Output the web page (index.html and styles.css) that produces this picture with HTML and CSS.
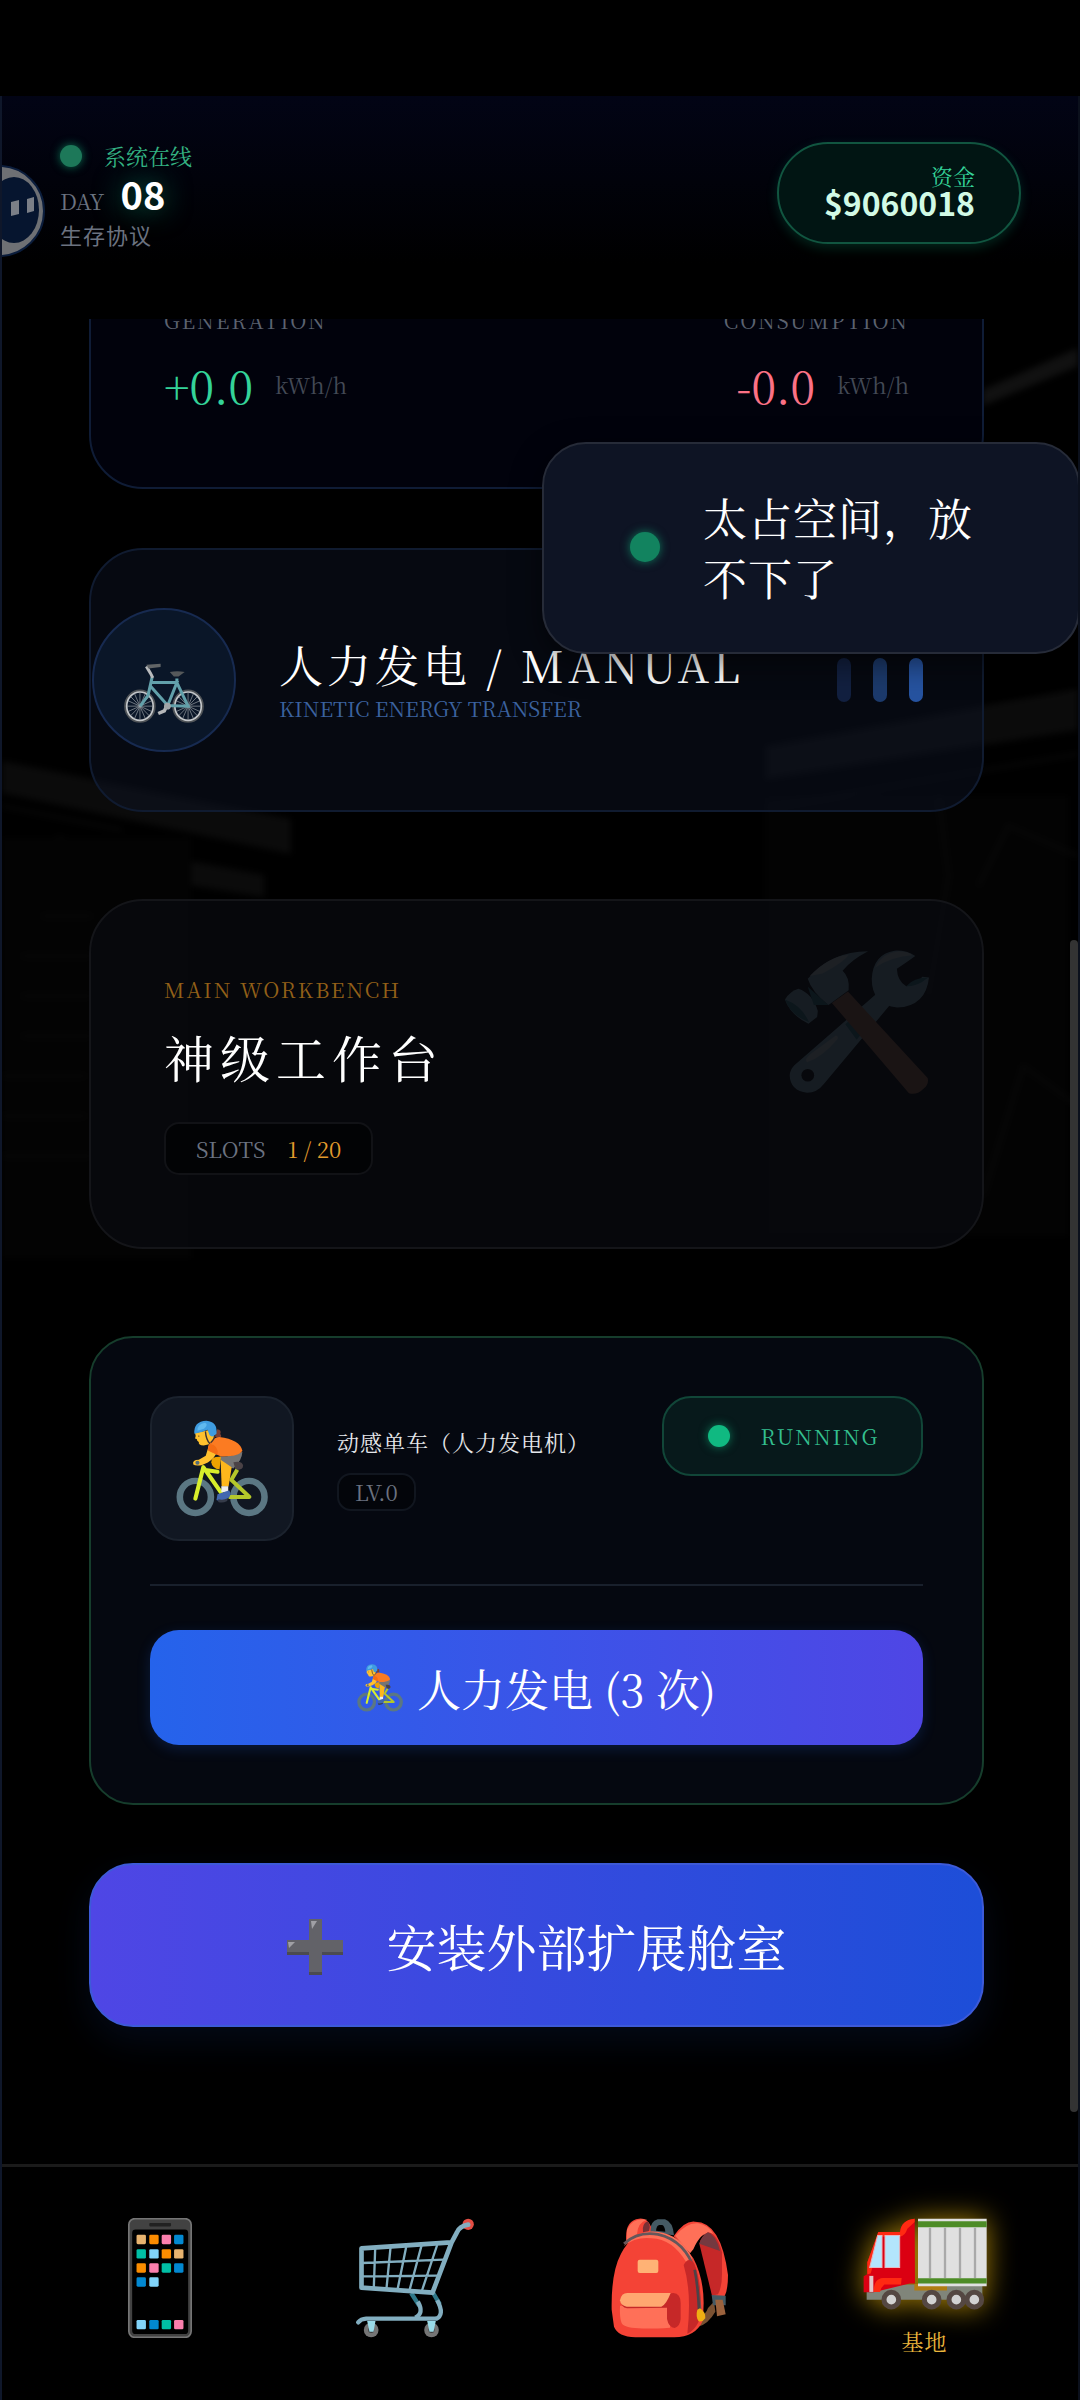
FILE: index.html
```
<!DOCTYPE html>
<html lang="zh-CN">
<head>
    <meta charset="UTF-8">
    <meta name="viewport" content="width=device-width, initial-scale=1.0">
    <title>生存协议</title>
    <link rel="stylesheet" href="styles.css">
</head>
<body>
    <!-- shared icon -->
    <svg class="defs" aria-hidden="true">
        <symbol id="cyclist" viewBox="336 306 266 290" preserveAspectRatio="none">
            <g fill="none" stroke="#5b7783" stroke-width="19">
                <ellipse cx="392" cy="536" rx="45" ry="48"/>
                <ellipse cx="547" cy="536" rx="45" ry="48"/>
            </g>
            <path d="M455 334q14 2 9 14q7 8-4 13l-12-6z" fill="#7a4034"/>
            <path d="M462 415q33 2 66-14q-1 26-26 50l-35-14z" fill="#757575"/>
            <path d="M502 432q26-5 28 11q0 14-22 12z" fill="#4a4246"/>
            <path d="M416 455l40 6M417 450l50 74M415 447l-23 94" fill="none" stroke="#d8ee2b" stroke-width="12" stroke-linecap="round"/>
            <path d="M513 455l-17 30l52 51h-60" fill="none" stroke="#b4c72a" stroke-width="12" stroke-linejoin="round"/>
            <path d="M438 432q0-18 28-16l-4 38q-22-4-24-22z" fill="#efa200"/>
            <path d="M465 425l32 22l-9 58h-20z" fill="#fdb71c"/>
            <path d="M467 504h20v18h-20z" fill="#eee"/>
            <path d="M456 528l34-12q8 14-3 24q-18 12-34 5z" fill="#4267b0"/>
            <path d="M458 543q15 4 28-3l-2 8q-14 8-26 3z" fill="#353b49"/>
            <path d="M430 385l26 14q-8 22-28 34l-18 8q-18 3-24-2q-4-14 16-14l20-12z" fill="#ffc12e"/>
            <path d="M391 345l45-10q18 20 2 42l-22 5q-16 0-14-10q-6-3-6-9l-5-2q4-6 0-16z" fill="#ffc12e"/>
            <path d="M433 377q8-18 28-20q60 8 67 41q-10 18-62 17l-36-17q-4-12 3-21z" fill="#fb7b22"/>
            <path d="M433 377q28 5 23 34l-27-14q0-14 4-20z" fill="#f46c14"/>
            <path d="M389 347q-3-37 35-39q33 3 29 39q-12 14-20 4l-6-16q-16 8-38 12z" fill="#3f9ce0"/>
            <path d="M398 338q-1-20 22-24q11 5-3 18z" fill="#60b9ef"/>
            <path d="M421 340q2 25 13 37M448 352q0 10-12 22" fill="none" stroke="#3f3432" stroke-width="4"/>
            <circle cx="398" cy="434" r="6" fill="#546e7a"/>
            <circle cx="402" cy="354" r="2" fill="#4a342c"/>
        </symbol>
    </svg>

    <div class="shell">
        <!-- faint control room behind the cards -->
        <svg class="backdrop" viewBox="0 0 1080 2304" preserveAspectRatio="none" aria-hidden="true">
            <g fill="#0b0b0b">
                <path d="M984 294l96-42v18l-96 40z" fill="#111"/>
                <path d="M0 665l290 58v35L0 697z"/>
                <path d="M55 740l208 39v22L55 768z"/>
                <path d="M766 650l314-58v42L766 684z"/>
                <path d="M0 742h190v420H0zM766 700h304v440H766z" fill="#030303"/>
            </g>
            <g fill="none" stroke="#090909" stroke-width="3">
                <path d="M766 712l314-54M940 700l10 80l-20 120M0 710l120 24M40 820h50M20 860h70M20 900h70M20 940h70M0 980h84M0 1020h84M0 1060h90"/>
                <path d="M980 790l30-60l70 30M985 1100l40-130l55 40"/>
            </g>
        </svg>

        <header class="topbar">
            <div class="status">
                <div class="status-line"><span class="dot"></span>系统在线</div>
                <div class="day"><span>DAY</span><strong>08</strong></div>
                <div class="protocol">生存协议</div>
            </div>
            <div class="funds">
                <span>资金</span>
                <strong>$9060018</strong>
            </div>
            <svg class="mascot" viewBox="0 0 92 92" aria-hidden="true">
                <circle cx="46" cy="46" r="45" fill="#6e7074" stroke="#0b1d3c" stroke-width="2"/>
                <ellipse cx="61" cy="45" rx="25" ry="33" fill="#06152f"/>
                <path d="M58 37l8-2v14l-8 2zM74 34l7-2v14l-7 2z" fill="#7b7f87"/>
            </svg>
        </header>

        <main class="content">
            <section class="card power">
                <div>
                    <div class="label">GENERATION</div>
                    <div class="reading"><span class="gain">+0.0</span><small>kWh/h</small></div>
                </div>
                <div class="right">
                    <div class="label">CONSUMPTION</div>
                    <div class="reading"><span class="loss">-0.0</span><small>kWh/h</small></div>
                </div>
            </section>

            <section class="card manual">
                <div class="round">
                    <svg viewBox="358 428 236 178" preserveAspectRatio="none" aria-hidden="true">
                        <g fill="none" stroke="#4f5357" stroke-width="7">
                            <ellipse cx="405" cy="556" rx="43" ry="46"/>
                            <ellipse cx="547" cy="556" rx="43" ry="46"/>
                        </g>
                        <g fill="none" stroke="#c4c7ca" stroke-width="5">
                            <ellipse cx="405" cy="556" rx="39" ry="42"/>
                            <ellipse cx="547" cy="556" rx="39" ry="42"/>
                        </g>
                        <g stroke="#9fa4a9" stroke-width="2">
                            <path d="M405 516v80M367 556h76M378 528l54 56M378 584l54-56M389 519l32 74M389 593l32-74M370 540l70 32M370 572l70-32"/>
                            <path d="M547 516v80M509 556h76M520 528l54 56M520 584l54-56M531 519l32 74M531 593l32-74M512 540l70 32M512 572l70-32"/>
                        </g>
                        <g fill="none" stroke="#62a0aa" stroke-width="9">
                            <path d="M441 470l-12 54l-23 32M438 486h76l-27 68l-50-56M514 474v12l33 70l-68-2"/>
                        </g>
                        <path d="M424 438l12 20l7 14" fill="none" stroke="#b9bbbd" stroke-width="9"/>
                        <path d="M424 433l42-3v10l-36 4z" fill="#626567"/>
                        <path d="M493 455q22-5 44 0l-18 13h-14z" fill="#55585a"/>
                        <path d="M487 548l-10 22l-18 8" fill="none" stroke="#b5b7b9" stroke-width="10"/>
                        <circle cx="486" cy="556" r="10" fill="#a2a5a7"/>
                    </svg>
                </div>
                <div class="manual-text">
                    <h2>人力发电 / MANUAL</h2>
                    <p>KINETIC ENERGY TRANSFER</p>
                </div>
                <div class="bars"><i></i><i></i><i></i></div>
            </section>

            <section class="card workbench">
                <div class="label">MAIN WORKBENCH</div>
                <h2>神级工作台</h2>
                <div class="slots"><span>SLOTS</span><b>1 / 20</b></div>
                <svg class="tools" viewBox="556 210 430 430" aria-hidden="true">
                    <path d="M570 585q0-16 14-31L830 340l38 36L672 610q-20 26-50 26q-50-5-52-51z" fill="#82aec0"/>
                    <path d="M622 545q-10-9 12-26l74-54q10 4 4 12q-46 54-90 68z" fill="#b9c8cf"/>
                    <path d="M945 228q-28-18-62-16q-64 10-68 84q0 78 76 86q86-4 95-90l-20-2q-20 28-48 28q-26-14-28-52q22-14 55-38z" fill="#82aec0"/>
                    <path d="M826 262q18-42 70-48q32 2 40 12q-60 4-110 36z" fill="#b9c8cf"/>
                    <path d="M918 318q22-26 66-26l-20 14q-26 14-46 12zM736 432l34-32l24 48l-24 30z" fill="#2f7889"/>
                    <circle cx="624" cy="584" r="19" fill="#07080c"/>
                    <path d="M696 368l48-34L982 592q5 20-14 34q-18 18-42 12z" fill="#a1684f"/>
                    <path d="M556 358q16-26 40-32q42 14 58 66l-2 18l-26 20q-54-26-70-72z" fill="#82aec0"/>
                    <path d="M556 358q50 18 72 68q-56-22-72-68zM624 320l62 54l-44 0z" fill="#2f7889"/>
                    <path d="M624 296q70-82 180-82q-50 26-76 58q22 20 18 58l-60 44q-50-38-62-78z" fill="#82aec0"/>
                    <path d="M630 288q54-58 116-64q-14 22-78 56z" fill="#b9c8cf"/>
                </svg>
            </section>

            <section class="card device">
                <div class="device-head">
                    <div class="tile"><svg aria-hidden="true"><use href="#cyclist"/></svg></div>
                    <div class="device-name">
                        <h3>动感单车（人力发电机）</h3>
                        <span class="level">LV.0</span>
                    </div>
                    <div class="running"><span class="dot"></span>RUNNING</div>
                </div>
                <button type="button" class="pedal">
                    <svg aria-hidden="true"><use href="#cyclist"/></svg>
                    <span>人力发电 (3 次)</span>
                </button>
            </section>

            <button type="button" class="expand">
                <svg viewBox="0 0 56 60" aria-hidden="true">
                    <path d="M22 4h13v21h21v15H35v20H22V40H0V25h22z" fill="#4b4b50"/>
                    <path d="M22 4h13v21h21v12H35v20H22V37H0V25h22z" fill="#626268"/>
                    <path d="M24 6h6l-5 8zM1 27h7l-6 6z" fill="#a0a0a5"/>
                </svg>
                <span>安装外部扩展舱室</span>
            </button>

            <div class="scrollbar"></div>
        </main>

        <div class="toast" role="status">
            <span class="dot"></span>
            <p>太占空间，放不下了</p>
        </div>

        <nav class="tabs">
            <a href="#phone" aria-label="手机">
                <svg class="phone" viewBox="143 206 190 358" aria-hidden="true">
                    <rect x="145" y="208" width="186" height="354" rx="18" fill="#424242" stroke="#757575" stroke-width="5"/>
                    <rect x="155" y="240" width="167" height="312" rx="10"/>
                    <rect x="206" y="221" width="65" height="10" rx="3" fill="#212121"/>
                    <g fill="#e8b36f"><rect x="168" y="256" width="28" height="28" rx="4"/><rect x="280" y="299" width="28" height="28" rx="4"/></g>
                    <g fill="#fb8c00"><rect x="206" y="256" width="28" height="28" rx="4"/><rect x="243" y="299" width="28" height="28" rx="4"/><rect x="168" y="341" width="28" height="28" rx="4"/></g>
                    <g fill="#fb7fad"><rect x="243" y="256" width="28" height="28" rx="4"/><rect x="206" y="341" width="28" height="28" rx="4"/><rect x="280" y="510" width="28" height="28" rx="4"/></g>
                    <g fill="#0288d1"><rect x="280" y="256" width="28" height="28" rx="4"/><rect x="280" y="341" width="28" height="28" rx="4"/><rect x="168" y="383" width="28" height="28" rx="4"/><rect x="206" y="510" width="28" height="28" rx="4"/></g>
                    <g fill="#00bfa5"><rect x="168" y="299" width="28" height="28" rx="4"/><rect x="243" y="341" width="28" height="28" rx="4"/><rect x="243" y="510" width="28" height="28" rx="4"/></g>
                    <g fill="#81d4fa"><rect x="206" y="299" width="28" height="28" rx="4"/><rect x="206" y="383" width="28" height="28" rx="4"/><rect x="168" y="510" width="28" height="28" rx="4"/></g>
                </svg>
            </a>
            <a href="#shop" aria-label="商店">
                <svg viewBox="827 205 357 360" aria-hidden="true">
                    <circle cx="1165" cy="224" r="17" fill="#e34d43"/>
                    <g fill="#757575"><circle cx="874" cy="541" r="22"/><circle cx="1055" cy="541" r="22"/></g>
                    <g fill="#424242"><circle cx="874" cy="541" r="9"/><circle cx="1055" cy="541" r="9"/></g>
                    <path d="M994 430l24 38M1060 430l20 34" stroke="#2f7889" stroke-width="13"/>
                    <path d="M1014 456q20 36-8 48M1072 452q24 44-4 56" fill="none" stroke="#82aec0" stroke-width="13"/>
                    <path d="M835 518q8-10 24-11h208" fill="none" stroke="#82aec0" stroke-width="13" stroke-linecap="round"/>
                    <path d="M862 514h25l-6 32h-12zM1042 514h26l-7 32h-12z" fill="#9adbe8"/>
                    <path d="M1165 225q-26 4-34 24l-16 30l-57 150l-213-15V296l268-18" fill="none" stroke="#82aec0" stroke-width="14" stroke-linejoin="round" stroke-linecap="round"/>
                    <path d="M886 298l-4 114M932 294l-12 122M979 292l-26 128M1025 288l-36 134M1072 286l-46 138M848 340l242-10M848 380l224-2" fill="none" stroke="#82aec0" stroke-width="7"/>
                </svg>
            </a>
            <a href="#bag" aria-label="背包">
                <svg viewBox="98 205 352 360" aria-hidden="true">
                    <path d="M213 248q2-34 24-39h22q24 8 27 48z" fill="#455a64"/>
                    <path d="M232 243q2-16 10-17h9q7 3 9 20z"/>
                    <path d="M143 276q-6-64 38-69q25-3 36 24l-4 34l-50 22z" fill="#f44336"/>
                    <path d="M145 240q18-38 60-30q-28 8-30 44l-31 20z" fill="#ff7058"/>
                    <path d="M193 248q-4-26 14-33q10 12 4 29z" fill="#7a3035"/>
                    <path d="M406 456l4 30q-22 38-52 45l-4-18q28-18 34-38z" fill="#7a5132"/>
                    <path d="M285 260q32-48 64-44q78 0 99 160q0 44-10 63h-38L398 300q-10-48-28-48q-18 14-36 56z" fill="#f44336"/>
                    <path d="M290 258q34-40 68-37q34 7 46 32q-34-14-60 46l-10 12z" fill="#ff7058"/>
                    <path d="M362 282q8-26 26-34q28 4 42 60v64q0 40-12 62l-18 4z" fill="#c62828"/>
                    <path d="M362 282q8-26 26-34q24 8 36 56z" fill="#743940"/>
                    <path d="M399 436l42 2v29h-38z" fill="#455a64"/>
                    <path d="M410 450h22l9 44l-26 6z" fill="#9b623d"/>
                    <path d="M99 480q-2-112 28-168q34-66 93-66q74 4 124 80q42 80 27 190q-22 46-84 47H170q-52-2-64-32z" fill="#f44336"/>
                    <path d="M135 290q42-50 100-44q72 8 106 80l-18 12q-42-70-104-72q-48-6-84 24z" fill="#ff7058"/>
                    <path d="M136 282q42-38 102-28q82 18 112 112q12 56 14 114" fill="none" stroke="#64575b" stroke-width="8"/>
                    <path d="M315 346q15-28 32-4q28 70 13 174q-14 28-34 36q14-124-11-206z" fill="#c62828"/>
                    <path d="M348 360q10 50 13 120" fill="none" stroke="#4c4247" stroke-width="8"/>
                    <rect x="177" y="330" width="62" height="40" rx="6" fill="#ffb275"/>
                    <path d="M124 468h150v66q-118 8-140-8q-12-8-10-58z" fill="#ff7058"/>
                    <path d="M126 450l158-20q22 2 22 30v48q-2 22-18 27q-18-2-23-27v-34l-120 2q-18-4-19-26z" fill="#c62828"/>
                    <path d="M124 452q4-22 22-22h130q-14 36-28 41H144q-18-3-20-19z" fill="#ffa770"/>
                    <path d="M356 480l8-4q18 12 16 30q-8 12-20 9q-10-14-4-35z" fill="#efae13"/>
                </svg>
            </a>
            <a href="#base" class="active">
                <svg class="truck" viewBox="850 203 372 275" preserveAspectRatio="none" aria-hidden="true">
                    <path d="M861 402h347v45H861z" fill="#80857a"/>
                    <path d="M1004 400h98v20h-98z" fill="#b07d12"/>
                    <path d="M1005 205q-40 4-44 40h-65l-33 90v36l-11 6v48h30l108-26h16z" fill="#db0012"/>
                    <path d="M1005 205q-40 4-44 40h-65l-33 90v36l10-2l32-110h56q16-4 22-24l22-20zM882 424q0-40 28-42h56l-2 20h-50q-10 8-13 22z" fill="#ff2a12"/>
                    <path d="M894 255h13v96h-37zM916 255h44v96h-44z" fill="#b3e5fc" stroke="#e6b8c0" stroke-width="3"/>
                    <path d="M869 376h12v48h-12z" fill="#e2c7cb"/>
                    <path d="M1015 205h206v202h-206z" fill="#e0e0e0"/>
                    <path d="M1015 213h206v18h-206zM1015 383h206v16h-206z" fill="#4d8c26"/>
                    <path d="M1051 232v150M1096 232v150M1141 232v150M1186 232v150" stroke="#a9a9a9" stroke-width="7"/>
                    <g fill="#d2d2d2" stroke="#544742" stroke-width="15">
                        <circle cx="935" cy="447" r="22"/>
                        <circle cx="1056" cy="447" r="22"/>
                        <circle cx="1130" cy="447" r="22"/>
                        <circle cx="1184" cy="447" r="22"/>
                    </g>
                </svg>
                <span>基地</span>
            </a>
        </nav>
    </div>
</body>
</html>
```
FILE: styles.css
```
* {
    box-sizing: border-box;
}
body {
    font-family: "Noto Serif CJK SC", "Liberation Serif", "Noto Sans CJK SC", serif;
    font-size: 22px;
    line-height: 24px;
    background: #000;
    color: #fff;
    margin: 0;
    padding-top: 96px;
    min-height: 100vh;
    display: flex;
    flex-direction: column;
}
h2, h3, p {
    margin: 0;
    font-weight: normal;
}
button {
    font-family: inherit;
    color: #fff;
    cursor: pointer;
}
svg {
    display: block;
    flex: none;
}
.defs {
    position: absolute;
    width: 0;
    height: 0;
}
.shell {
    flex: 1;
    display: flex;
    flex-direction: column;
    position: relative;
    overflow: hidden;
    border-left: 2px solid #0f172a;
    border-right: 2px solid #0b101c;
}
.backdrop {
    position: absolute;
    inset: 0;
    width: 100%;
    height: 100%;
    filter: blur(3px);
}
.dot {
    width: 22px;
    height: 22px;
    border-radius: 50%;
    background: #10b981;
    box-shadow: 0 0 10px rgba(16, 185, 129, 0.6);
    flex: none;
}

/* top bar */
.topbar {
    position: relative;
    display: flex;
    justify-content: space-between;
    align-items: flex-start;
    height: 223px;
    padding: 46px 57px 0 58px;
    background: linear-gradient(#020415, #000 75%);
}
.status {
    padding-top: 2px;
}
.status-line {
    display: flex;
    align-items: center;
    gap: 22px;
    color: #34b383;
}
.status .dot {
    background: #1d7859;
}
.day {
    display: flex;
    align-items: baseline;
    gap: 16px;
    height: 54px;
    color: #6b7280;
}
.day strong {
    font: bold 38px/52px "Noto Sans CJK SC", sans-serif;
    color: #fff;
    text-shadow: 0 0 28px rgba(16, 185, 129, 0.6);
}
.protocol {
    font-family: "Noto Sans CJK SC", sans-serif;
    letter-spacing: 1px;
    color: #6b7280;
}
.funds {
    display: flex;
    flex-direction: column;
    align-items: flex-end;
    justify-content: center;
    min-width: 244px;
    height: 102px;
    padding: 0 44px 7px;
    border: 2px solid #115540;
    border-radius: 51px;
    background: #011513;
    box-shadow: 0 4px 12px rgba(16, 185, 129, 0.2);
    color: #34d399;
}
.funds strong {
    font: bold 32px/28px "Noto Sans CJK SC", sans-serif;
    color: #d1fae5;
}
.mascot {
    position: absolute;
    left: -49px;
    top: 69px;
    width: 92px;
}

/* scrolling area */
.content {
    position: relative;
    flex: 1;
    overflow: hidden;
    display: flex;
    flex-direction: column;
    padding: 0 94px 0 87px;
}
.card {
    border: 2px solid #101b30;
    border-radius: 54px;
    background: rgba(13, 20, 38, 0.45);
}
.label {
    font-size: 21px;
    line-height: 30px;
    letter-spacing: 2px;
    color: #5c6270;
}
.power {
    display: flex;
    justify-content: space-between;
    margin-top: -100px;
    padding: 84px 73px 72px;
    border-color: #0f1c36;
    background: #01020c;
}
.right {
    text-align: right;
}
.reading {
    display: flex;
    align-items: center;
    gap: 22px;
    height: 60px;
    margin-top: 20px;
    font-size: 44px;
    line-height: 60px;
}
.right .reading {
    justify-content: flex-end;
}
.reading small {
    font-size: 22px;
    color: #434955;
}
.gain {
    color: #34d399;
}
.loss {
    color: #fb7185;
}
.manual {
    display: flex;
    align-items: center;
    height: 264px;
    margin-top: 59px;
    padding-right: 59px;
}
.round {
    width: 144px;
    height: 144px;
    margin-left: 1px;
    border: 2px solid #172a50;
    border-radius: 50%;
    background: #0a1628;
    padding: 53px 30px 0;
}
.round svg {
    width: 80px;
    height: 60px;
}
.manual-text {
    flex: 1;
    margin-left: 43px;
    padding-bottom: 4px;
}
.manual h2 {
    font-size: 44px;
    line-height: 60px;
    letter-spacing: 4px;
    white-space: nowrap;
}
.manual p {
    font-size: 21px;
    line-height: 28px;
    color: #3b629f;
}
.bars {
    display: flex;
    gap: 22px;
}
.bars i {
    width: 14px;
    height: 44px;
    border-radius: 7px;
    background: #122040;
}
.bars i:nth-child(2) {
    background: #1c3a6c;
}
.bars i:nth-child(3) {
    background: #2653a0;
}
.workbench {
    position: relative;
    height: 350px;
    margin-top: 87px;
    padding: 73px;
    border-color: #141519;
    background: rgba(10, 12, 18, 0.6);
}
.workbench .label {
    color: #926018;
}
.workbench h2 {
    margin-top: 17px;
    font-size: 50px;
    line-height: 70px;
    letter-spacing: 6px;
}
.slots {
    display: inline-flex;
    align-items: center;
    gap: 22px;
    height: 53px;
    margin-top: 31px;
    padding: 0 30px;
    border: 2px solid #111216;
    border-radius: 15px;
    background: #020305;
    color: #6b7280;
}
.slots b {
    font-weight: normal;
    color: #e39b2c;
}
.tools {
    position: absolute;
    right: 53px;
    top: 49px;
    width: 144px;
    opacity: 0.12;
}
.device {
    margin-top: 87px;
    padding: 58px 59px;
    border-color: #163d2c;
    border-radius: 44px;
    background: #050810;
}
.device-head {
    display: flex;
    align-items: flex-start;
    padding-bottom: 43px;
    border-bottom: 2px solid #19202c;
}
.tile {
    display: flex;
    align-items: center;
    justify-content: center;
    width: 144px;
    height: 145px;
    border: 2px solid #1b222d;
    border-radius: 29px;
    background: #111722;
}
.tile svg {
    width: 92px;
    height: 97px;
}
.device-name {
    flex: 1;
    margin: 31px 0 0 43px;
}
.device-name h3 {
    font-size: 22px;
    line-height: 30px;
    letter-spacing: 1px;
    white-space: nowrap;
    color: #e5e7eb;
}
.level {
    display: inline-block;
    margin-top: 16px;
    padding: 5px 16px;
    border: 2px solid #11161f;
    border-radius: 14px;
    background: #03050a;
    color: #6b7280;
}
.running {
    display: flex;
    align-items: center;
    justify-content: space-between;
    min-width: 261px;
    height: 80px;
    padding: 0 42px 0 44px;
    border: 2px solid #114638;
    border-radius: 29px;
    background: #07191b;
    font-size: 21px;
    letter-spacing: 2px;
    color: #34c090;
}
.pedal {
    display: flex;
    align-items: center;
    justify-content: center;
    gap: 14px;
    width: 100%;
    height: 115px;
    margin-top: 44px;
    border: 0;
    border-radius: 29px;
    background: linear-gradient(to right, #2563eb, #4f46e5);
    box-shadow: 0 4px 14px rgba(37, 99, 235, 0.2);
    font-size: 44px;
}
.pedal svg {
    width: 46px;
    height: 48px;
}
.expand {
    display: flex;
    align-items: center;
    justify-content: center;
    gap: 44px;
    height: 164px;
    margin-top: 58px;
    border: 2px solid #3d5ad8;
    border-radius: 44px;
    background: linear-gradient(to right, #4f46e5, #1d4ed8);
    box-shadow: 0 14px 36px rgba(37, 99, 235, 0.1);
    font-size: 50px;
}
.expand svg {
    width: 56px;
}
.scrollbar {
    position: absolute;
    right: 0;
    top: 621px;
    bottom: 52px;
    width: 8px;
    border-radius: 4px;
    background: #333;
}

/* toast */
.toast {
    position: absolute;
    right: -2px;
    top: 346px;
    width: 50%;
    display: flex;
    align-items: center;
    gap: 43px;
    padding: 43px 86px 45px;
    border: 2px solid #262b38;
    border-radius: 44px;
    background: #0e1424;
    box-shadow: 0 10px 30px rgba(0, 0, 0, 0.5);
}
.toast .dot {
    width: 30px;
    height: 30px;
    background: #12835f;
}
.toast p {
    font-size: 44px;
    line-height: 60px;
    letter-spacing: 1px;
}

/* bottom tabs */
.tabs {
    position: relative;
    display: grid;
    grid-template-columns: repeat(4, 1fr);
    height: 236px;
    padding: 51px 26px 0 30px;
    border-top: 3px solid #1a1a1a;
    background: #000;
}
.tabs a {
    display: flex;
    flex-direction: column;
    align-items: center;
    color: #eab53c;
    text-decoration: none;
}
.tabs svg {
    width: 120px;
    height: 120px;
}
.tabs .truck {
    width: 124px;
    height: 92px;
    filter: drop-shadow(0 0 14px rgba(234, 179, 8, 0.7));
}
.tabs span {
    margin-top: 19px;
    letter-spacing: 1px;
}
```
